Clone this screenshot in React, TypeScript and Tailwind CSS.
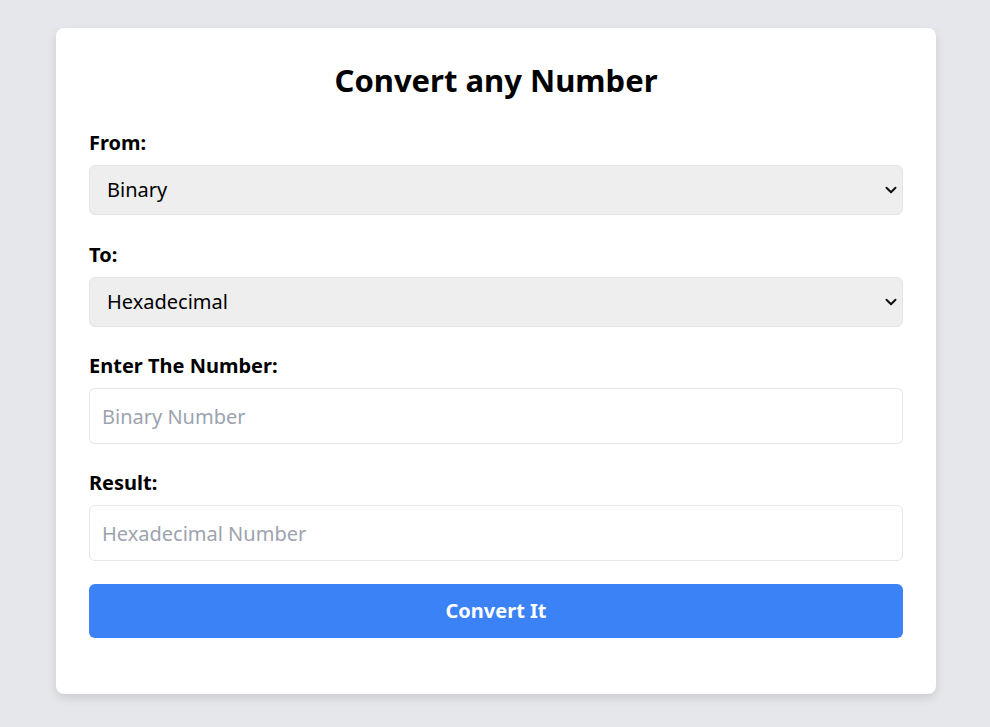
const font = { fontFamily: "'Noto Sans', 'Open Sans', sans-serif" };

const options = [
  { value: "binary", label: "Binary" },
  { value: "decimal", label: "Decimal" },
  { value: "octal", label: "Octal" },
  { value: "hexadecimal", label: "Hexadecimal" },
];

function Label({ children }: { children: React.ReactNode }) {
  return <label className="mb-2 block text-xl leading-7 font-bold text-black">{children}</label>;
}

function Select({ value }: { value: string }) {
  return (
    <div className="relative">
      <select
        defaultValue={value}
        className="block h-[50px] w-full appearance-none rounded-md border border-[#e5e5e5] bg-[#eeeeee] pl-[17px] pr-10 text-xl text-black outline-none"
      >
        {options.map((o) => (
          <option key={o.value} value={o.value}>
            {o.label}
          </option>
        ))}
      </select>
      <svg
        className="pointer-events-none absolute right-[6px] top-1/2 -translate-y-1/2"
        width="12"
        height="8"
        viewBox="0 0 12 8"
        fill="none"
        stroke="#111"
        strokeWidth="2"
        strokeLinecap="round"
        strokeLinejoin="round"
        aria-hidden
      >
        <path d="M1.5 1.8 6 6.2l4.5-4.4" />
      </svg>
    </div>
  );
}

export default function App() {
  return (
    <div className="min-h-screen bg-[#e5e7eb] pt-[28px] pb-8" style={font}>
      <div className="ml-[56px] w-[880px] rounded-lg bg-white px-[33px] pt-8 pb-[56px] shadow-[0_4px_10px_rgba(0,0,0,0.12)]">
        <h1 className="mb-[29px] text-center text-[31px] leading-10 font-bold text-black">Convert any Number</h1>

        <div className="mb-[26px]">
          <Label>From:</Label>
          <Select value="binary" />
        </div>

        <div className="mb-[25px]">
          <Label>To:</Label>
          <Select value="hexadecimal" />
        </div>

        <div className="mb-[25px]">
          <Label>Enter The Number:</Label>
          <input
            type="text"
            placeholder="Binary Number"
            className="block h-[56px] w-full rounded-md border border-[#e5e7eb] bg-white px-3 text-xl text-black outline-none placeholder:text-[#9ca3af]"
          />
        </div>

        <div className="mb-[23px]">
          <Label>Result:</Label>
          <input
            type="text"
            readOnly
            placeholder="Hexadecimal Number"
            className="block h-[56px] w-full rounded-md border border-[#e5e7eb] bg-white px-3 text-xl text-black outline-none placeholder:text-[#9ca3af]"
          />
        </div>

        <button className="block h-[54px] w-full rounded-md bg-[#3b82f6] text-xl font-bold text-white">Convert It</button>
      </div>
    </div>
  );
}
